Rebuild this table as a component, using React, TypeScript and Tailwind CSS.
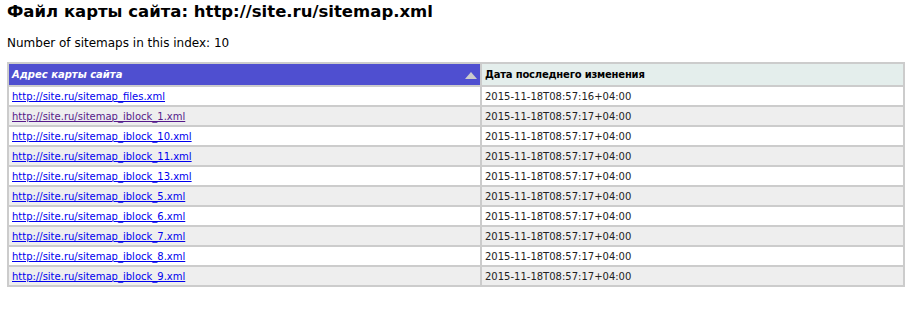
import React from "react";

const rows: { url: string; date: string; visited?: boolean }[] = [
  { url: "http://site.ru/sitemap_files.xml", date: "2015-11-18T08:57:16+04:00" },
  { url: "http://site.ru/sitemap_iblock_1.xml", date: "2015-11-18T08:57:17+04:00", visited: true },
  { url: "http://site.ru/sitemap_iblock_10.xml", date: "2015-11-18T08:57:17+04:00" },
  { url: "http://site.ru/sitemap_iblock_11.xml", date: "2015-11-18T08:57:17+04:00" },
  { url: "http://site.ru/sitemap_iblock_13.xml", date: "2015-11-18T08:57:17+04:00" },
  { url: "http://site.ru/sitemap_iblock_5.xml", date: "2015-11-18T08:57:17+04:00" },
  { url: "http://site.ru/sitemap_iblock_6.xml", date: "2015-11-18T08:57:17+04:00" },
  { url: "http://site.ru/sitemap_iblock_7.xml", date: "2015-11-18T08:57:17+04:00" },
  { url: "http://site.ru/sitemap_iblock_8.xml", date: "2015-11-18T08:57:17+04:00" },
  { url: "http://site.ru/sitemap_iblock_9.xml", date: "2015-11-18T08:57:17+04:00" },
];

export default function App() {
  return (
    <div className="w-[910px] h-[310px] bg-white px-[7px] pt-[2px] text-black font-['DejaVu_Sans',Verdana,sans-serif]">
      <h1 className="text-[16.5px] leading-[20px] font-bold">Файл карты сайта: http://site.ru/sitemap.xml</h1>
      <p className="mt-[14px] text-[12px] leading-[14px]">Number of sitemaps in this index: 10</p>
      <div className="mt-[12px] w-[898px] bg-[#cccccc] p-[2px] grid grid-cols-[471px_1fr] gap-[2px] text-[10px]">
        <div className="relative h-[21px] bg-[#4f4fd0] text-white font-bold italic pl-[3px] flex items-center">
          Адрес карты сайта
          <span className="absolute right-[3px] top-[8px] w-0 h-0 border-l-[6px] border-r-[6px] border-b-[7px] border-l-transparent border-r-transparent border-b-[#cccccc]" />
        </div>
        <div className="h-[21px] bg-[#e4eeec] font-bold pl-[3px] flex items-center tracking-[-0.2px]">Дата последнего изменения</div>
        {rows.map((r, i) => {
          const bg = i % 2 === 0 ? "bg-white" : "bg-[#eeeeee]";
          return (
            <React.Fragment key={r.url}>
              <div className={`${bg} h-[18px] pl-[3px] flex items-center`}>
                <a
                  href="#"
                  className={`underline ${r.visited ? "text-[#551a8b]" : "text-[#0000ee]"}`}
                >
                  {r.url}
                </a>
              </div>
              <div className={`${bg} h-[18px] pl-[3px] flex items-center text-[#222]`}>{r.date}</div>
            </React.Fragment>
          );
        })}
      </div>
    </div>
  );
}
